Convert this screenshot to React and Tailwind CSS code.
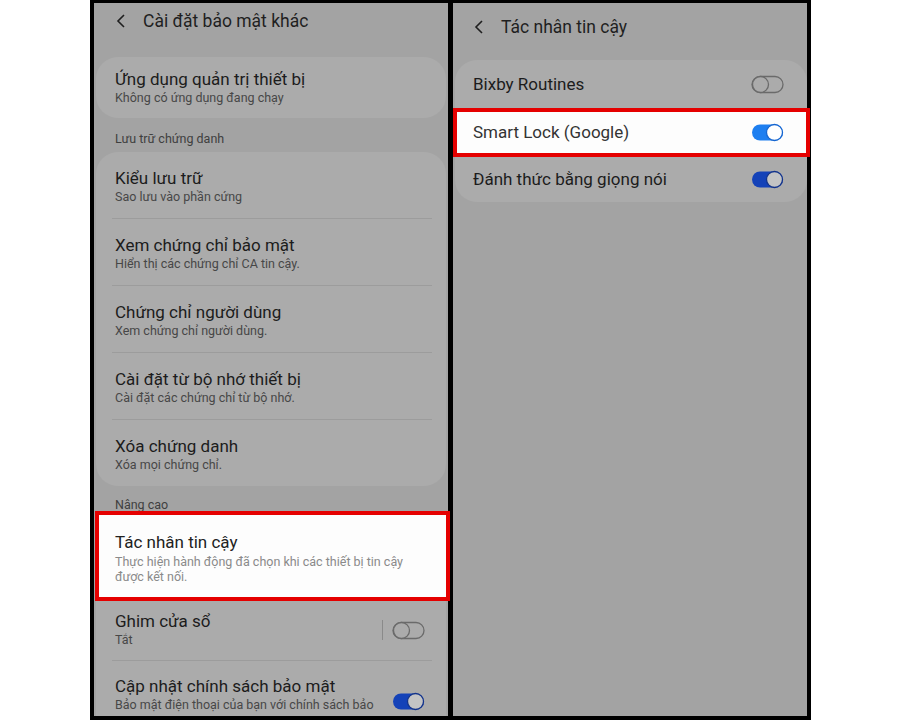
import React from "react";

const font = { fontFamily: "Roboto, 'Noto Sans', sans-serif" };

function Toggle({ on = false, bright = false }) {
  if (!on) {
    return (
      <svg width="33" height="19" viewBox="0 0 33 19">
        <rect x="1" y="1.5" width="31" height="16" rx="8" fill="none" stroke="#6a6a6a" strokeWidth="1.3" />
        <circle cx="9.5" cy="9.5" r="8" fill="#ababab" stroke="#6a6a6a" strokeWidth="1.3" />
      </svg>
    );
  }
  const blue = bright ? "#1e7ff0" : "#1442b8";
  const knob = bright ? "#ffffff" : "#c4c4c4";
  const ring = bright ? "#1565d0" : "#13338a";
  return (
    <svg width="33" height="19" viewBox="0 0 33 19">
      <rect x="1" y="1.5" width="31" height="16" rx="8" fill={blue} />
      <circle cx="23.5" cy="9.5" r="8" fill={knob} stroke={ring} strokeWidth="1.3" />
    </svg>
  );
}

function Chevron() {
  return (
    <svg width="10" height="14" viewBox="0 0 10 14">
      <path d="M8 1 L2 7 L8 13" fill="none" stroke="#1f1f1f" strokeWidth="1.6" />
    </svg>
  );
}

function Row({ title, sub, last }) {
  return (
    <div className={`relative ${last ? "h-[66px]" : "h-[67px]"} pl-[19px] pt-[16px]`}>
      <div className="text-[17px] leading-[20px] text-[#1c1c1c]">{title}</div>
      <div className="mt-[1px] text-[12.5px] leading-[16px] text-[#474747]">{sub}</div>
      {!last && <div className="absolute bottom-0 left-[16px] right-[14px] h-px bg-[#9c9c9c]" />}
    </div>
  );
}

function LeftPanel() {
  return (
    <div className="w-[354px] h-[713px] bg-[#a3a3a3] overflow-y-clip overflow-x-visible" style={font}>
      <div className="h-[36px] flex items-center pl-[22px]">
        <Chevron />
        <span className="ml-[17px] text-[17.5px] text-[#1f1f1f]">Cài đặt bảo mật khác</span>
      </div>

      <div className="mt-[18px] mx-[2px] h-[61px] rounded-[22px] bg-[#ababab] pl-[19px] pt-[12px]">
        <div className="text-[17px] leading-[20px] text-[#1c1c1c]">Ứng dụng quản trị thiết bị</div>
        <div className="mt-[1px] text-[12.5px] leading-[16px] text-[#474747]">Không có ứng dụng đang chạy</div>
      </div>

      <div className="h-[34px] pt-[13px] pl-[21px] text-[12.5px] leading-[16px] text-[#3f3f3f]">Lưu trữ chứng danh</div>

      <div className="mx-[2px] rounded-[22px] bg-[#ababab]">
        <Row title="Kiểu lưu trữ" sub="Sao lưu vào phần cứng" />
        <Row title="Xem chứng chỉ bảo mật" sub="Hiển thị các chứng chỉ CA tin cậy." />
        <Row title="Chứng chỉ người dùng" sub="Xem chứng chỉ người dùng." />
        <Row title="Cài đặt từ bộ nhớ thiết bị" sub="Cài đặt các chứng chỉ từ bộ nhớ." />
        <Row title="Xóa chứng danh" sub="Xóa mọi chứng chỉ." last />
      </div>

      <div className="h-[25px] pt-[11px] pl-[21px] text-[12.5px] leading-[16px] text-[#3f3f3f]">Nâng cao</div>

      <div className="relative z-10 ml-[1px] -mr-[2px] border-[4px] border-[#e50000] bg-[#fdfdfd] pl-[16px] pt-[17px] pb-[13px]">
        <div className="text-[17px] leading-[20px] text-[#222]">Tác nhân tin cậy</div>
        <div className="mt-[2px] text-[12.5px] leading-[15px] text-[#8a8a8a] pr-[40px]">
          Thực hiện hành động đã chọn khi các thiết bị tin cậy được kết nối.
        </div>
      </div>

      <div className="mx-[2px] bg-[#ababab]">
        <div className="relative h-[60px] pl-[19px] pr-[21px] pt-[10px] flex">
          <div className="flex-1">
            <div className="text-[17px] leading-[20px] text-[#1c1c1c]">Ghim cửa sổ</div>
            <div className="mt-[1px] text-[12.5px] leading-[16px] text-[#474747]">Tắt</div>
          </div>
          <div className="flex items-center h-[38px] gap-[9px]">
            <div className="w-px h-[20px] bg-[#8a8a8a]" />
            <Toggle />
          </div>
          <div className="absolute bottom-0 left-[16px] right-[14px] h-px bg-[#9c9c9c]" />
        </div>
        <div className="h-[60px] pl-[19px] pr-[21px] pt-[15px] flex">
          <div className="flex-1">
            <div className="text-[17px] leading-[20px] text-[#1c1c1c]">Cập nhật chính sách bảo mật</div>
            <div className="mt-[1px] text-[12.5px] leading-[16px] text-[#474747]">Bảo mật điện thoại của bạn với chính sách bảo</div>
          </div>
          <div className="flex items-center h-[50px]">
            <Toggle on />
          </div>
        </div>
      </div>
    </div>
  );
}

function RightPanel() {
  return (
    <div className="w-[354px] h-[713px] bg-[#a3a3a3] overflow-y-clip overflow-x-visible" style={font}>
      <div className="h-[48px] flex items-center pl-[21px]">
        <Chevron />
        <span className="ml-[17px] text-[17.5px] text-[#1f1f1f]">Tác nhân tin cậy</span>
      </div>

      <div className="mt-[9px] ml-[2px] rounded-[22px] bg-[#ababab]">
        <div className="h-[48px] pl-[18px] pr-[23px] flex items-center justify-between pt-[1px]">
          <span className="text-[17px] text-[#1c1c1c]">Bixby Routines</span>
          <Toggle />
        </div>
        <div className="relative z-10 h-[49px] -ml-[2px] -mr-[3px] border-[4px] border-[#e50000] bg-[#fdfdfd] pl-[16px] pr-[22px] flex items-center justify-between">
          <span className="text-[17px] text-[#333]">Smart Lock (Google)</span>
          <Toggle on bright />
        </div>
        <div className="h-[45px] pl-[18px] pr-[23px] flex items-center justify-between">
          <span className="text-[17px] text-[#1c1c1c]">Đánh thức bằng giọng nói</span>
          <Toggle on />
        </div>
      </div>
    </div>
  );
}

export default function App() {
  return (
    <div className="w-[900px] h-[720px] bg-white pl-[90px]">
      <div className="w-[721px] h-[720px] bg-black pt-[3px] px-[4px] flex gap-[5px]">
        <LeftPanel />
        <RightPanel />
      </div>
    </div>
  );
}
